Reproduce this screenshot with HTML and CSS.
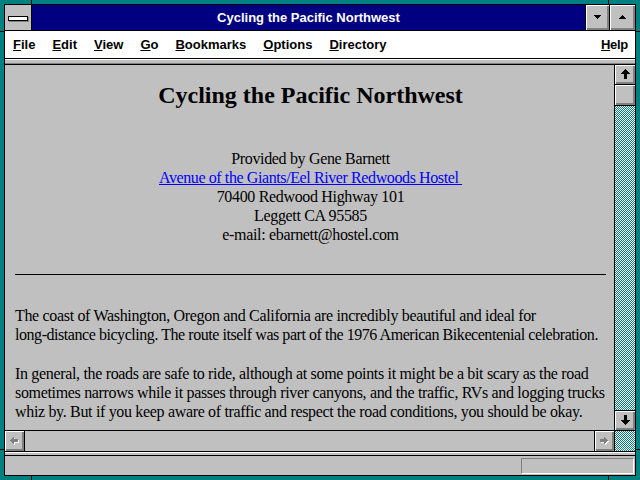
FILE: index.html
```html
<!DOCTYPE html>
<html>
<head>
<meta charset="utf-8">
<title>Cycling the Pacific Northwest</title>
<link rel="stylesheet" href="styles.css">
</head>
<body>
<svg class="defs" width="0" height="0" aria-hidden="true">
  <defs>
    <pattern id="dither" width="2" height="2" patternUnits="userSpaceOnUse">
      <rect x="0" y="0" width="2" height="2" fill="#ffffff"/>
      <rect x="0" y="0" width="1" height="1" fill="#008080"/>
      <rect x="1" y="1" width="1" height="1" fill="#008080"/>
    </pattern>
  </defs>
</svg>
<div class="window">
  <div class="frame">
    <div class="titlebar">
      <div class="sysmenu"><span class="sysbar"></span></div>
      <div class="title">Cycling the Pacific Northwest</div>
      <div class="tbtn tbtn-min">
        <svg width="7" height="4" viewBox="0 0 7 4" shape-rendering="crispEdges"><path d="M0 0h7v1h-1v1h-1v1h-1v1h-1v-1h-1v-1h-1v-1h-1z" fill="#000"/></svg>
      </div>
      <div class="tbtn tbtn-max">
        <svg width="7" height="4" viewBox="0 0 7 4" shape-rendering="crispEdges"><path d="M0 4h7v-1h-1v-1h-1v-1h-1v-1h-1v1h-1v1h-1v1h-1z" fill="#000"/></svg>
      </div>
    </div>
    <div class="menubar">
      <span class="menu"><u>F</u>ile</span>
      <span class="menu"><u>E</u>dit</span>
      <span class="menu"><u>V</u>iew</span>
      <span class="menu"><u>G</u>o</span>
      <span class="menu"><u>B</u>ookmarks</span>
      <span class="menu"><u>O</u>ptions</span>
      <span class="menu"><u>D</u>irectory</span>
      <span class="menu menu-help"><u>H</u>elp</span>
    </div>
    <div class="toolstrip"></div>
    <div class="main">
      <div class="content">
        <h1>Cycling the Pacific Northwest</h1>
        <div class="address">
          Provided by Gene Barnett<br>
          <a href="#">Avenue of the Giants/Eel River Redwoods Hostel&nbsp;</a><br>
          70400 Redwood Highway 101<br>
          Leggett CA 95585<br>
          e-mail: ebarnett@hostel.com
        </div>
        <hr>
        <p>The coast of Washington, Oregon and California are incredibly beautiful and ideal for<br><span class="tight">long-distance bicycling. The route itself was part of the 1976 American Bikecentenial celebration.</span></p>
        <p>In general, the roads are safe to ride, although at some points it might be a bit scary as the road<br>sometimes narrows while it passes through river canyons, and the traffic, RVs and logging trucks<br>whiz by. But if you keep aware of traffic and respect the road conditions, you should be okay.</p>
      </div>
      <div class="vscroll">
        <div class="sbtn sbtn-up">
          <svg width="9" height="10" viewBox="0 0 9 10" shape-rendering="crispEdges"><path d="M4 0h1v1h1v1h1v1h1v1h1v1h-3v5h-3v-5h-3v-1h1v-1h1v-1h1v-1h1z" fill="#000"/></svg>
        </div>
        <div class="thumb"></div>
        <div class="track"><svg class="fill" shape-rendering="crispEdges"><rect width="100%" height="100%" fill="url(#dither)"/></svg></div>
        <div class="sbtn sbtn-down">
          <svg width="9" height="10" viewBox="0 0 9 10" shape-rendering="crispEdges"><path d="M4 10h1v-1h1v-1h1v-1h1v-1h1v-1h-3v-5h-3v5h-3v1h1v1h1v1h1v1h1z" fill="#000"/></svg>
        </div>
      </div>
    </div>
    <div class="hscroll">
      <div class="hbtn hbtn-left">
        <svg width="9" height="8" viewBox="0 0 9 8" shape-rendering="crispEdges"><path transform="translate(1 1)" d="M0 3h1v-1h1v-1h1v-1h1v2h4v3h-4v2h-1v-1h-1v-1h-1v-1h-1z" fill="#fff"/><path d="M0 3h1v-1h1v-1h1v-1h1v2h4v3h-4v2h-1v-1h-1v-1h-1v-1h-1z" fill="#808080"/></svg>
      </div>
      <div class="htrack"></div>
      <div class="hbtn hbtn-right">
        <svg width="9" height="8" viewBox="0 0 9 8" shape-rendering="crispEdges"><g transform="translate(8 0) scale(-1 1)"><path transform="translate(-1 1)" d="M0 3h1v-1h1v-1h1v-1h1v2h4v3h-4v2h-1v-1h-1v-1h-1v-1h-1z" fill="#fff"/><path d="M0 3h1v-1h1v-1h1v-1h1v2h4v3h-4v2h-1v-1h-1v-1h-1v-1h-1z" fill="#808080"/></g></svg>
      </div>
      <div class="corner"><svg class="fill" shape-rendering="crispEdges"><rect width="100%" height="100%" fill="url(#dither)"/></svg></div>
    </div>
    <div class="sepstrip"></div>
    <div class="statusbar"><div class="statusbox"></div></div>
  </div>
  <span class="tick tick-v tick-tl"></span>
  <span class="tick tick-v tick-tr"></span>
  <span class="tick tick-v tick-bl"></span>
  <span class="tick tick-v tick-br"></span>
  <span class="tick tick-h tick-lt"></span>
  <span class="tick tick-h tick-lb"></span>
  <span class="tick tick-h tick-rt"></span>
  <span class="tick tick-h tick-rb"></span>
</div>
</body>
</html>
```

FILE: styles.css
```css
* { box-sizing: border-box; }
html, body { margin: 0; padding: 0; }
body {
  width: 640px;
  height: 480px;
  overflow: hidden;
  background: #008080;
  font-family: "Liberation Sans", Arial, sans-serif;
}
.defs { position: absolute; width: 0; height: 0; }
.window {
  position: relative;
  width: 640px;
  height: 480px;
  padding: 4px;
  background: #008080;
}
.frame {
  height: 472px;
  border: 1px solid #000;
  background: #c0c0c0;
  display: flex;
  flex-direction: column;
}

/* title bar */
.titlebar {
  flex: none;
  height: 26px;
  display: flex;
  border-bottom: 1px solid #000;
}
.sysmenu {
  width: 27px;
  border-right: 1px solid #000;
  background: #c0c0c0;
  display: flex;
  align-items: center;
  justify-content: center;
}
.sysbar {
  width: 20px;
  height: 5px;
  border: 1px solid #000;
  background: #fff;
  box-shadow: 1px 1px 0 #808080;
  margin: 1px 1px 0 0;
}
.title {
  flex: 1;
  background: #000080;
  color: #fff;
  font-weight: bold;
  font-size: 13px;
  line-height: 26px;
  text-align: center;
}
.tbtn {
  border-left: 1px solid #000;
  background: #c0c0c0;
  box-shadow: inset 1px 1px 0 #fff, inset -1px -1px 0 #808080, inset -2px -2px 0 #808080;
  display: flex;
  align-items: center;
  justify-content: center;
}
.tbtn svg { display: block; margin: 0 1px 1px 0; }
.tbtn-min { width: 24px; }
.tbtn-max { width: 26px; }

/* menu bar */
.menubar {
  flex: none;
  height: 28px;
  background: #fff;
  border-bottom: 1px solid #000;
  display: flex;
  align-items: center;
  gap: 17px;
  padding: 0 7px 1px 8px;
  font-size: 13px;
  font-weight: bold;
  color: #000;
}
.menu u { text-decoration: underline; text-underline-offset: 1px; }
.menu-help { margin-left: auto; letter-spacing: -0.3px; }

.toolstrip {
  flex: none;
  height: 6px;
  border-bottom: 1px solid #000;
  background: #c0c0c0;
  box-shadow: inset 0 1px 0 #fff, inset 0 -1px 0 #808080;
}

/* main area */
.main {
  flex: 1;
  min-height: 0;
  display: flex;
}
.content {
  flex: 1;
  overflow: hidden;
  padding: 0 8px 0 10px;
  background: #c0c0c0;
  color: #000;
  font-family: "Liberation Serif", "Times New Roman", serif;
  font-size: 16px;
  line-height: 19px;
  letter-spacing: -0.33px;
}
.content h1 {
  font-size: 24px;
  line-height: 28px;
  font-weight: bold;
  letter-spacing: 0;
  text-align: center;
  margin: 16px 0 40px;
}
.address { text-align: center; }
.address a { color: #0000ff; text-decoration: underline; letter-spacing: -0.4px; }
.content hr {
  border: 0;
  height: 1px;
  background: #000;
  margin: 30px 0 31px;
}
.content p {
  margin: 0 0 20px;
  white-space: nowrap;
}
.content .tight { letter-spacing: -0.45px; }

/* vertical scrollbar */
.vscroll {
  width: 21px;
  border-left: 1px solid #000;
  display: flex;
  flex-direction: column;
}
.sbtn {
  flex: none;
  height: 20px;
  background: #c0c0c0;
  box-shadow: inset 1px 1px 0 #fff, inset -1px -1px 0 #808080, inset -2px -2px 0 #808080;
  display: flex;
  align-items: center;
  justify-content: center;
}
.sbtn svg { display: block; margin: 0 0 1px 1px; }
.sbtn-up { border-bottom: 1px solid #000; }
.sbtn-down { border-top: 1px solid #000; }
.thumb {
  flex: none;
  height: 21px;
  border-bottom: 1px solid #000;
  background: #c0c0c0;
  box-shadow: inset 1px 1px 0 #fff, inset -1px -1px 0 #808080, inset -2px -2px 0 #808080;
}
.track { flex: 1; overflow: hidden; }
.fill { display: block; width: 100%; height: 100%; }

/* horizontal scrollbar */
.hscroll {
  flex: none;
  height: 22px;
  border-top: 1px solid #000;
  border-bottom: 1px solid #000;
  display: flex;
}
.hbtn {
  width: 20px;
  background: #c0c0c0;
  box-shadow: inset 1px 1px 0 #fff, inset -1px -1px 0 #808080, inset -2px -2px 0 #808080;
  display: flex;
  align-items: center;
  justify-content: center;
}
.hbtn svg { display: block; margin: 0 1px 1px 0; }
.hbtn-left { border-right: 1px solid #000; }
.hbtn-right { border-left: 1px solid #000; }
.htrack { flex: 1; background: #c0c0c0; }
.corner { width: 21px; border-left: 1px solid #000; overflow: hidden; }

.sepstrip {
  flex: none;
  height: 4px;
  border-bottom: 1px solid #000;
  background: #c0c0c0;
  box-shadow: inset 0 1px 0 #fff;
}
.statusbar {
  flex: none;
  height: 19px;
  background: #c0c0c0;
  display: flex;
  justify-content: flex-end;
  align-items: flex-start;
}
.statusbox {
  width: 113px;
  height: 16px;
  margin: 2px 1px 0 0;
  border-top: 1px solid #808080;
  border-left: 1px solid #808080;
  border-right: 1px solid #fff;
  border-bottom: 1px solid #fff;
}

/* resize-frame ticks */
.tick { position: absolute; background: #000; }
.tick-v { width: 1px; height: 4px; }
.tick-h { width: 4px; height: 1px; }
.tick-tl { left: 31px; top: 0; }
.tick-tr { left: 608px; top: 0; }
.tick-bl { left: 31px; bottom: 0; }
.tick-br { left: 608px; bottom: 0; }
.tick-lt { left: 0; top: 31px; }
.tick-lb { left: 0; top: 449px; }
.tick-rt { right: 0; top: 31px; }
.tick-rb { right: 0; top: 449px; }
```
